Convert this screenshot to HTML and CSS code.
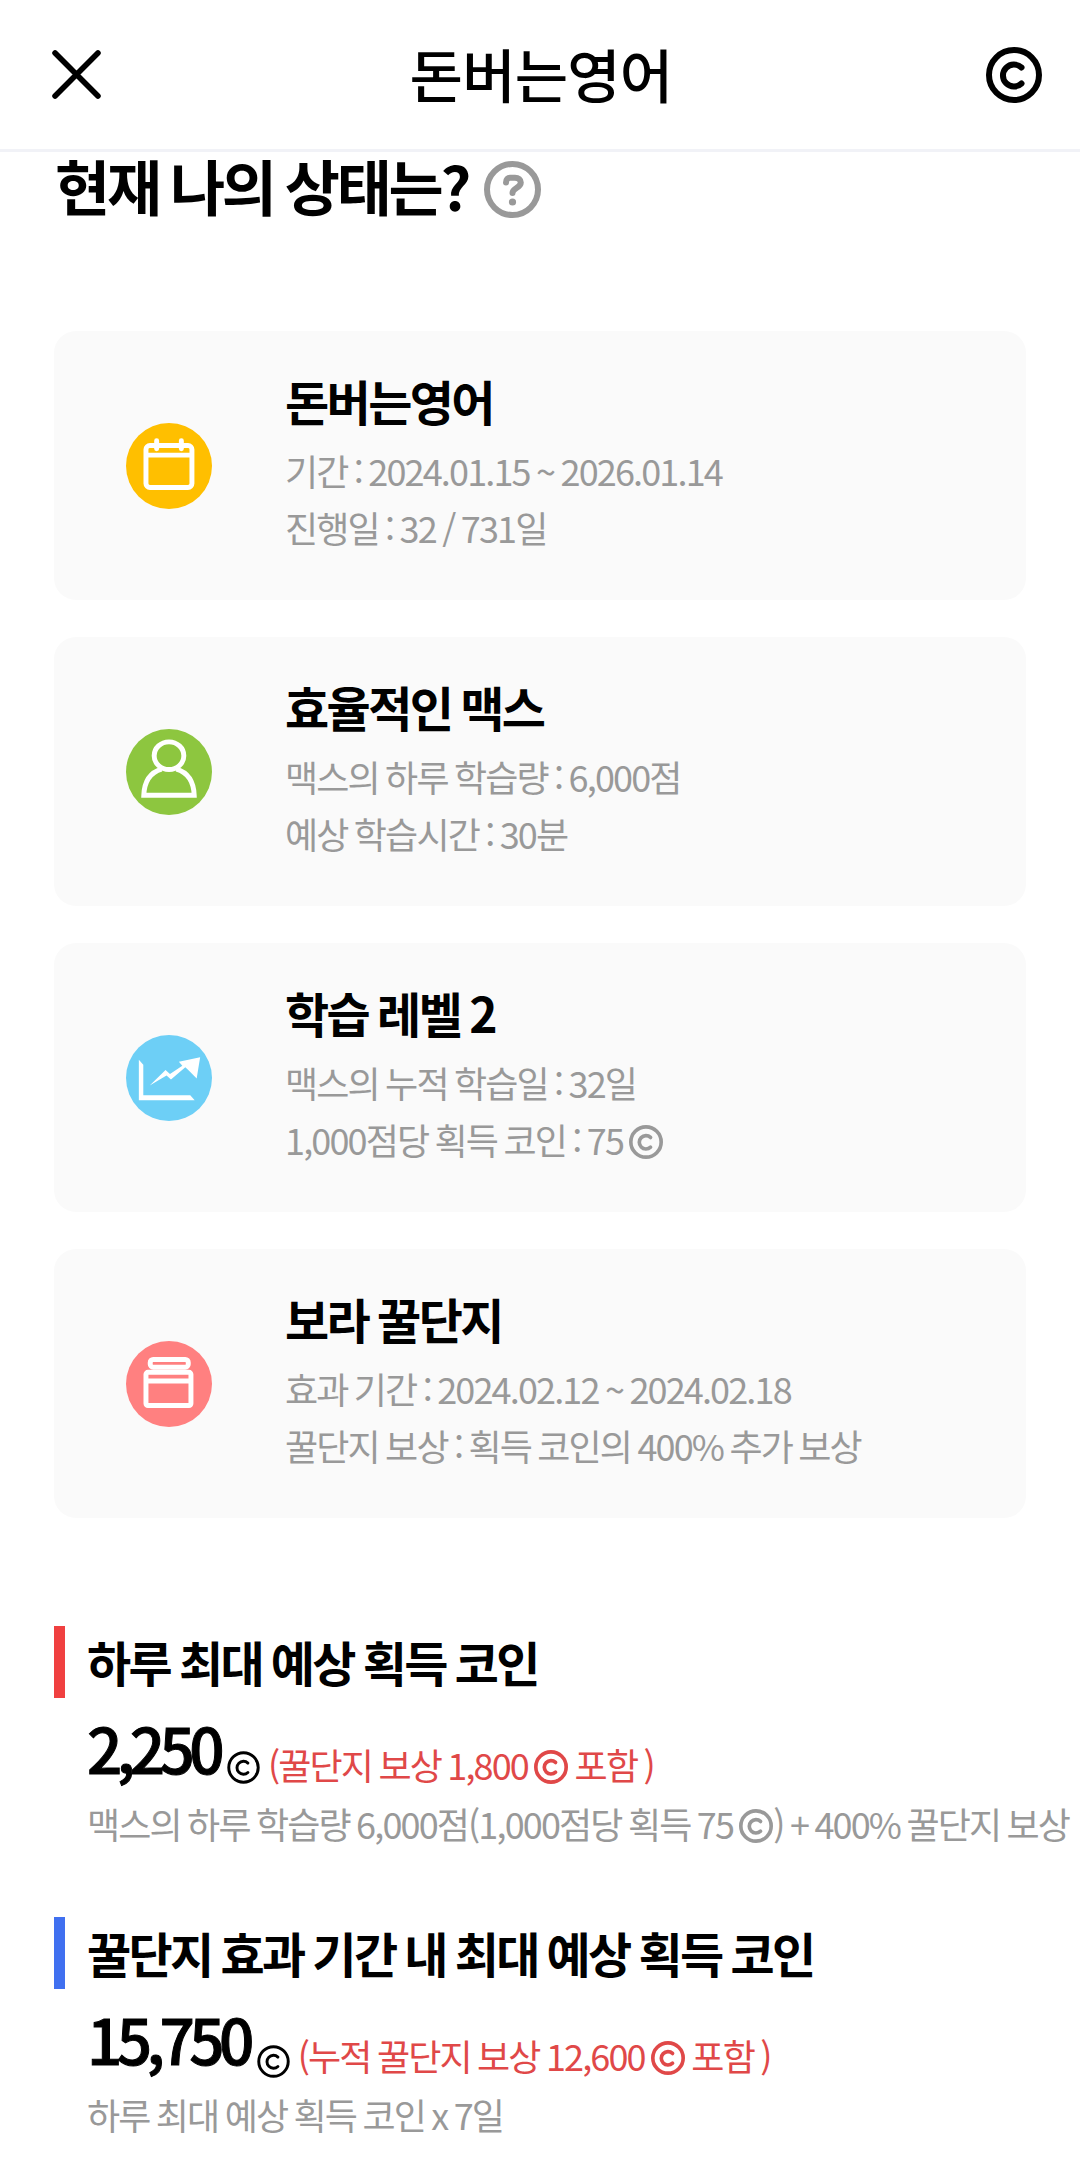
FILE: index.html
```
<!doctype html>
<html lang="ko">
<head>
	<meta charset="UTF-8">
	<title>돈버는영어</title>
	<link rel="stylesheet" href="styles.css">
</head>
<body>
	<svg class="defs">
		<symbol id="coin" viewBox="0 0 56 56">
			<circle cx="28" cy="28" r="25"/>
			<path d="M35.5 20.5 A11 11 0 1 0 35.5 36.500"/>
		</symbol>
	</svg>

	<header class="header">
		<svg class="close" viewBox="0 0 48 48"><path d="M3 3 L45 45 M45 3 L3 45"/></svg>
		<h1>돈버는영어</h1>
		<svg class="coin coin-top"><use href="#coin"/></svg>
	</header>

	<div class="content">
		<h2>현재 나의 상태는?
			<svg class="help" viewBox="0 0 57 57">
				<circle cx="28.5" cy="28.5" r="25.5"/>
				<path d="M22 21.500 C22 18 24 16.700 26 16.700 H31 C34.500 16.700 36.800 18.500 36.800 21.500 C36.800 27 28.500 27 28.500 32"/>
				<circle class="dot" cx="28.5" cy="41" r="3.6"/>
			</svg>
		</h2>

		<ul class="cards">
			<li>
				<svg class="icon" viewBox="0 0 87 87">
					<circle cx="43.5" cy="43.5" r="43.5" fill="#ffbf00"/>
					<rect x="20.2" y="22.8" width="46.5" height="42.4" rx="4"/>
					<path d="M20 32.500 H67"/>
					<path class="pin" d="M31 18 V26 M56 18 V26"/>
				</svg>
				<div class="info">
					<h3>돈버는영어</h3>
					<p>기간 : 2024.01.15 ~ 2026.01.14</p>
					<p>진행일 : 32 / 731일</p>
				</div>
			</li>
			<li>
				<svg class="icon" viewBox="0 0 87 87">
					<circle cx="43.5" cy="43.5" r="43.5" fill="#8dc63f"/>
					<ellipse cx="43.5" cy="27" rx="15" ry="14"/>
					<path d="M36 40.500 C24 44 18.500 54 18 67 H69 C68.500 54 63 44 51 40.500"/>
				</svg>
				<div class="info">
					<h3>효율적인 맥스</h3>
					<p>맥스의 하루 학습량 : 6,000점</p>
					<p>예상 학습시간 : 30분</p>
				</div>
			</li>
			<li>
				<svg class="icon" viewBox="0 0 87 87">
					<circle cx="43.5" cy="43.5" r="43.5" fill="#6dcff6"/>
					<path class="solid" d="M13 25 L17.500 30 V61 H65 L69.500 66 H13 Z"/>
					<path class="solid" d="M24 51 L40 35.500 L44.500 39.500 L57 31 L53.500 27 L75 22.500 L71.500 44 L63.500 36 L60 32.500 L45.500 45 L41 41 Z"/>
				</svg>
				<div class="info">
					<h3>학습 레벨 2</h3>
					<p>맥스의 누적 학습일 : 32일</p>
					<p>1,000점당 획득 코인 : 75 <svg class="coin"><use href="#coin"/></svg></p>
				</div>
			</li>
			<li>
				<svg class="icon" viewBox="0 0 87 87">
					<circle cx="43.5" cy="43.5" r="43.5" fill="#ff8080"/>
					<rect x="24.5" y="18.7" width="38.5" height="7.8" rx="3"/>
					<rect x="20.2" y="31.700" width="45.500" height="33.6" rx="2"/>
					<path d="M20 40.500 H66"/>
				</svg>
				<div class="info">
					<h3>보라 꿀단지</h3>
					<p>효과 기간 : 2024.02.12 ~ 2024.02.18</p>
					<p>꿀단지 보상 : 획득 코인의 400% 추가 보상</p>
				</div>
			</li>
		</ul>

		<div class="expect">
			<h3 class="red">하루 최대 예상 획득 코인</h3>
			<div class="amount">
				<strong>2,250</strong>
				<svg class="coin coin-sum"><use href="#coin"/></svg>
				<span>(꿀단지 보상 1,800 <svg class="coin"><use href="#coin"/></svg> 포함 )</span>
			</div>
			<p>맥스의 하루 학습량 6,000점(1,000점당 획득 75 <svg class="coin"><use href="#coin"/></svg>) + 400% 꿀단지 보상</p>
		</div>
		<div class="expect">
			<h3 class="blue">꿀단지 효과 기간 내 최대 예상 획득 코인</h3>
			<div class="amount">
				<strong>15,750</strong>
				<svg class="coin coin-sum low"><use href="#coin"/></svg>
				<span>(누적 꿀단지 보상 12,600 <svg class="coin"><use href="#coin"/></svg> 포함 )</span>
			</div>
			<p>하루 최대 예상 획득 코인 x 7일</p>
		</div>
	</div>
</body>
</html>
```
FILE: styles.css
```
* {
	margin: 0;
	padding: 0;
	box-sizing: border-box;
}

body {
	width: 1080px;
	height: 2172px;
	background: #fff;
	color: #000;
	font-family: "Noto Sans CJK KR", sans-serif;
	overflow: hidden;
}

svg {
	fill: none;
	stroke: currentColor;
}

.defs {
	display: none;
}

.header {
	display: flex;
	align-items: center;
	justify-content: space-between;
	height: 152px;
	padding: 0 38px 2px 52px;
	border-bottom: 3px solid #f1f2f7;
}

.header h1 {
	margin: 0 5px 2px 0;
	font-size: 58px;
	line-height: 80px;
	font-weight: 500;
	letter-spacing: -0.8px;
}

.close {
	width: 49px;
	height: 49px;
	margin-top: 1px;
	stroke-width: 5.5;
	stroke-linecap: round;
}

.coin {
	width: 34px;
	height: 34px;
	stroke-width: 6;
	stroke-linecap: round;
	vertical-align: -4px;
}

.coin-top {
	width: 56px;
	height: 56px;
	margin-top: 2px;
}

.content {
	padding: 0 54px;
}

.content h2 {
	display: flex;
	align-items: center;
	gap: 16px;
	height: 65px;
	padding-left: 1px;
	font-size: 60px;
	font-weight: 700;
	letter-spacing: -0.055em;
	word-spacing: -0.04em;
}

.help {
	width: 57px;
	height: 57px;
	margin-top: 9px;
	color: #999;
	stroke-width: 6;
	stroke-linecap: round;
}

.help .dot {
	fill: #999;
	stroke: none;
}

.cards {
	margin-top: 114px;
	list-style: none;
}

.cards li {
	display: flex;
	align-items: center;
	height: 269px;
	margin-bottom: 37px;
	padding-left: 72px;
	border-radius: 22px;
	background: #fafafa;
}

.icon {
	width: 86px;
	height: 86px;
	margin-right: 73px;
	color: #fff;
	stroke-width: 5;
}

.icon circle {
	stroke: none;
}

.icon .pin {
	stroke-linecap: round;
}

.icon .solid {
	fill: #fff;
	stroke: none;
}

.info {
	padding-bottom: 11px;
}

.info h3,
.expect h3 {
	font-size: 48px;
	line-height: 72px;
	font-weight: 700;
	letter-spacing: -0.054em;
	word-spacing: -0.04em;
}

.info h3 {
	margin-bottom: 6px;
}

.info p,
.expect p,
.amount span {
	color: #999;
	font-size: 36px;
	line-height: 57px;
	font-weight: 400;
	letter-spacing: -0.0515em;
	word-spacing: -0.053em;
	white-space: nowrap;
}

.expect {
	margin-top: 108px;
}

.expect + .expect {
	margin-top: 65px;
}

.expect h3 {
	padding: 0 0 2px 22px;
	border-left: 11px solid #f04040;
	line-height: 70px;
	letter-spacing: -0.055em;
}

.expect h3.blue {
	border-color: #4070f0;
}

.amount {
	display: flex;
	align-items: baseline;
	height: 97px;
	padding-left: 33px;
}

.expect p {
	padding-left: 33px;
}

.amount strong {
	font-size: 62px;
	line-height: 98px;
	font-weight: 500;
	letter-spacing: -0.09em;
	-webkit-text-stroke: 1px #000;
}

.amount span {
	position: relative;
	top: 6px;
	margin-left: 8px;
	color: #e04848;
}

.coin-sum {
	position: relative;
	top: 10px;
	width: 33px;
	height: 33px;
	margin-left: 8px;
	stroke-width: 5;
}

.coin-sum.low {
	top: 13px;
}
```
